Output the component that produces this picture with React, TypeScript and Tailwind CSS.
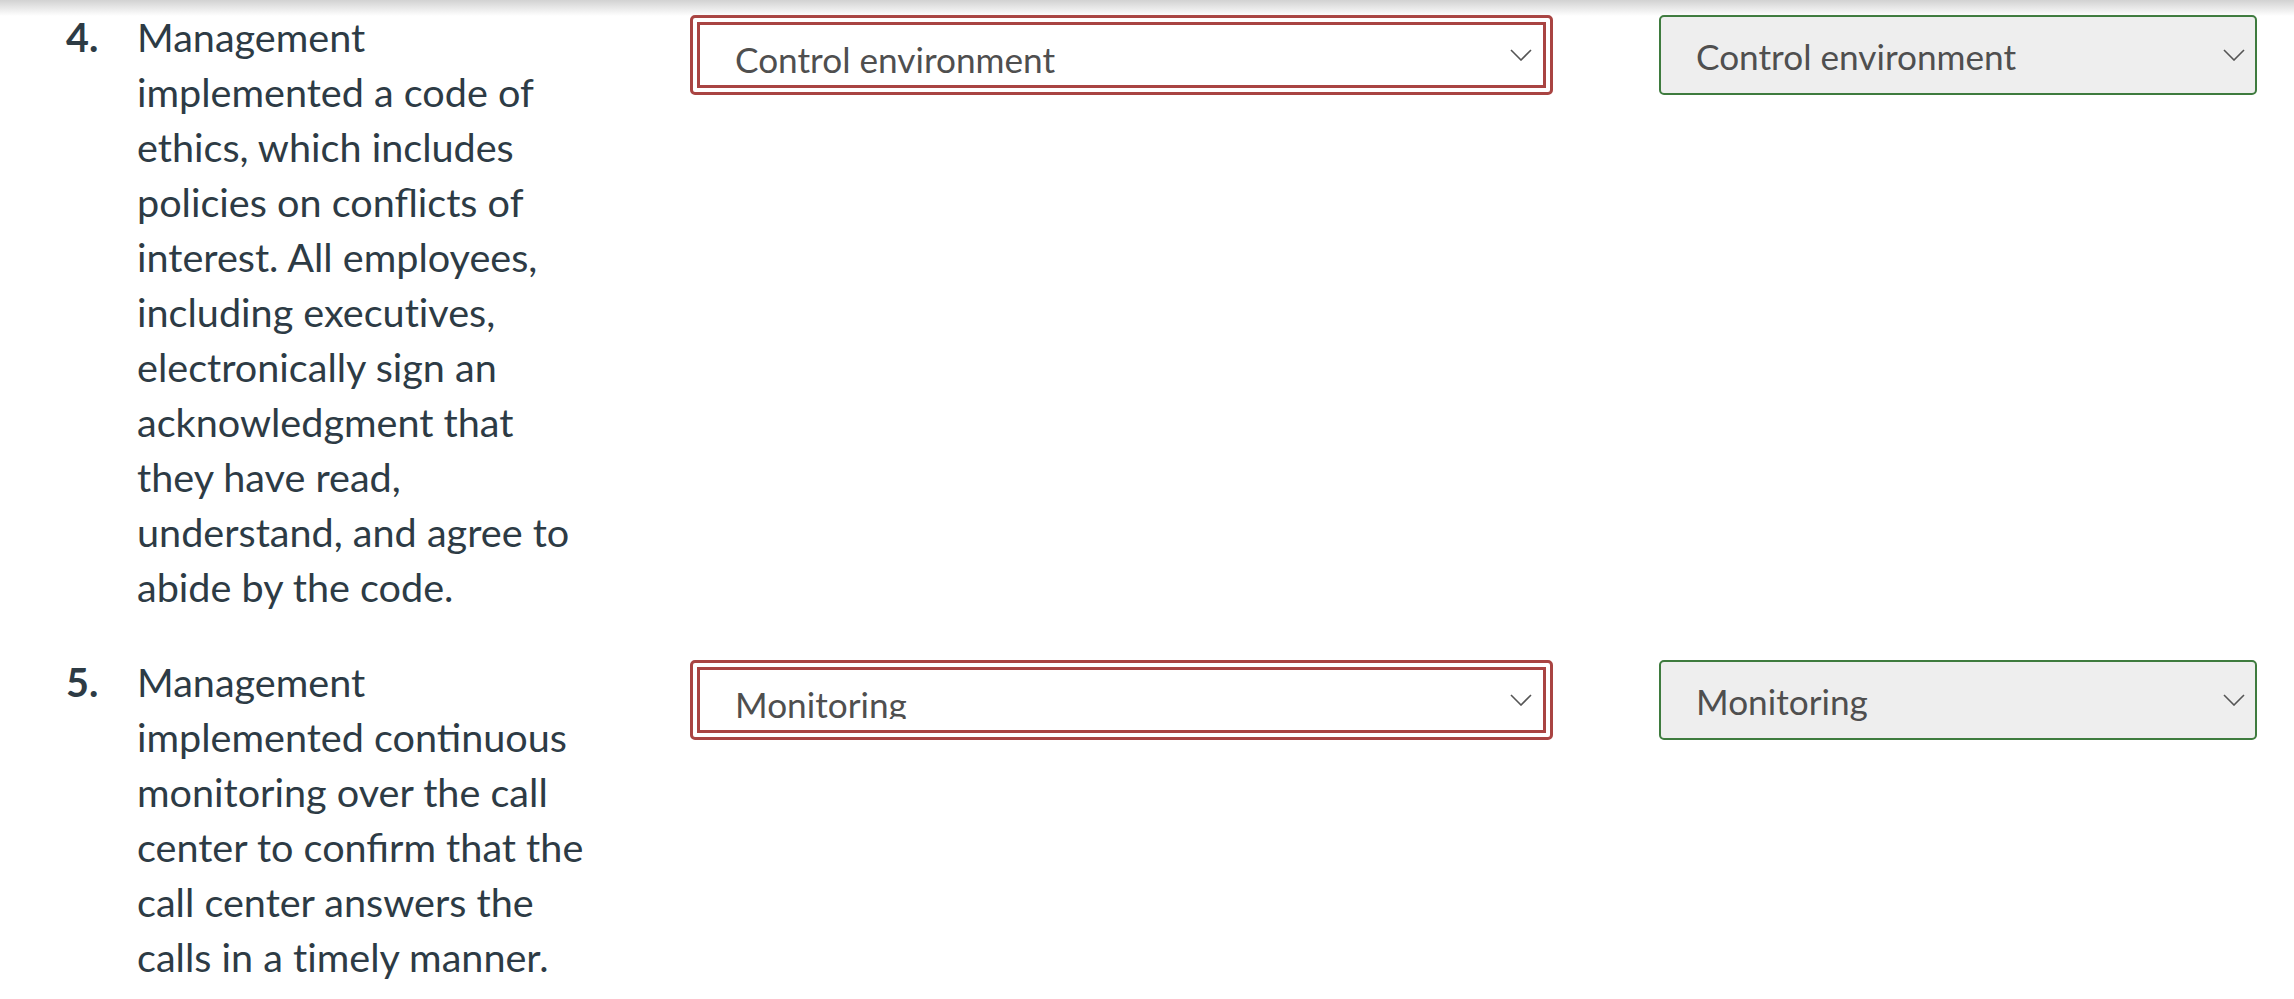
function Chevron() {
  return (
    <svg width="22" height="12" viewBox="0 0 22 12" fill="none" className="shrink-0">
      <polyline points="1,1 11,11 21,1" stroke="#555555" strokeWidth="1.6" />
    </svg>
  );
}

function AnswerSelect({ value }: { value: string }) {
  return (
    <div className="mt-[6px] ml-[99px] w-[863px] h-[80px] shrink-0 rounded-[5px] border-[3px] border-[#a94442] p-[4px]">
      <div className="h-full border-[3px] border-[#a94442] bg-white flex items-start pl-[35px] pr-[11px]">
        <div className="flex-1 pt-[7px]">
          <div className="h-[42px] overflow-hidden text-[35.2px] leading-[55px] text-[#4f4f4f]">{value}</div>
        </div>
        <div className="self-center">
          <Chevron />
        </div>
      </div>
    </div>
  );
}

function CorrectSelect({ value }: { value: string }) {
  return (
    <div className="mt-[6px] ml-[106px] w-[598px] h-[80px] shrink-0 rounded-[5px] border-2 border-[#3e7b3e] bg-[#eeeeee] flex items-center pl-[35px] pr-[10px]">
      <div className="flex-1 pt-[2px] text-[35.2px] leading-[55px] text-[#4f4f4f]">{value}</div>
      <Chevron />
    </div>
  );
}

function Question({ num, lines, answer }: { num: string; lines: string; answer: string }) {
  return (
    <div className="flex items-start pl-[66px]">
      <div className="w-[71px] shrink-0 font-bold">{num}</div>
      <div className="w-[454px] shrink-0">{lines}</div>
      <AnswerSelect value={answer} />
      <CorrectSelect value={answer} />
    </div>
  );
}

export default function App() {
  return (
    <div
      className="relative min-h-[999px] bg-white text-[39.6px] leading-[55px] text-[#2d3b45]"
      style={{ fontFamily: "Lato, 'Noto Sans', sans-serif" }}
    >
      {/* shadow from header above */}
      <div className="pointer-events-none absolute inset-x-0 top-0 h-[16px] bg-gradient-to-b from-[#d2d2d2] to-white/0" />

      <div className="flex flex-col gap-[40px] pt-[9px]">
        <Question
          num="4."
          lines={"Management implemented a code of ethics, which includes policies on conflicts of interest. All employees, including execut\u200Cives, electronically sign an acknowledgment that they have read, understand, and agree to abide by the code."}
          answer="Control environment"
        />
        <Question
          num="5."
          lines={"Management implemented continuous monitoring over the call center to confirm that the call center answers the calls in a t\u200Cimely manner."}
          answer="Monitoring"
        />
      </div>
    </div>
  );
}
